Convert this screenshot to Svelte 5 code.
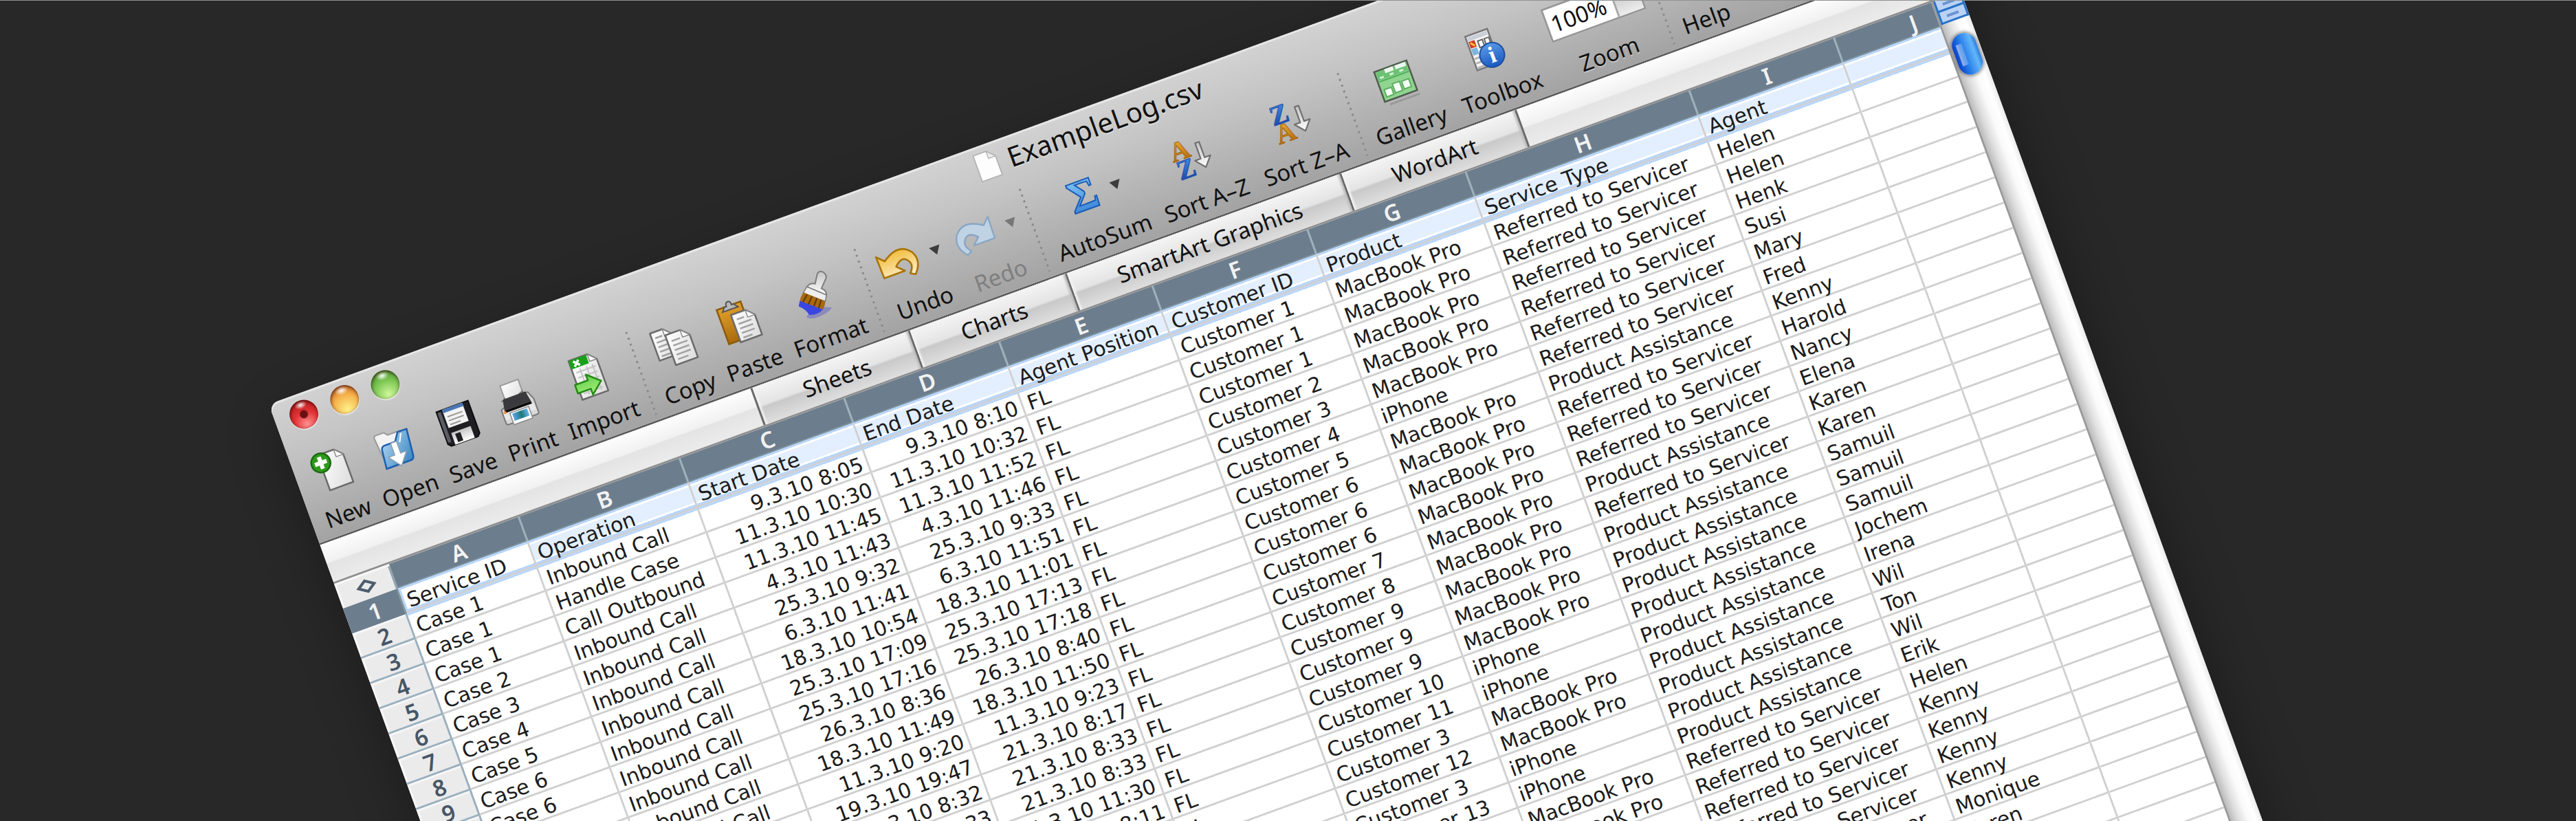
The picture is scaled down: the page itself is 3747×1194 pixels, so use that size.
<script>
  const tools = [
    { id: 'new', label: 'New' },
    { id: 'open', label: 'Open' },
    { id: 'save', label: 'Save' },
    { id: 'print', label: 'Print' },
    { id: 'import', label: 'Import' },
    { id: 'sep1', sep: true },
    { id: 'copy', label: 'Copy' },
    { id: 'paste', label: 'Paste' },
    { id: 'format', label: 'Format' },
    { id: 'sep2', sep: true },
    { id: 'undo', label: 'Undo', menu: true },
    { id: 'redo', label: 'Redo', menu: true, disabled: true },
    { id: 'sep3', sep: true },
    { id: 'sum', label: 'AutoSum', menu: true },
    { id: 'az', label: 'Sort A–Z', wide: true },
    { id: 'za', label: 'Sort Z–A', wide: true },
    { id: 'sep4', sep: true },
    { id: 'gallery', label: 'Gallery' },
    { id: 'toolbox', label: 'Toolbox', wide: true },
    { id: 'zoom', zoom: true },
    { id: 'sep5', sep: true },
    { id: 'help', label: 'Help' }
  ];

  const tabs = ['Sheets', 'Charts', 'SmartArt Graphics', 'WordArt'];
  const letters = ['A', 'B', 'C', 'D', 'E', 'F', 'G', 'H', 'I', 'J'];

  const MB = 'MacBook Pro';
  const IP = 'iPhone';
  const RS = 'Referred to Servicer';
  const PA = 'Product Assistance';

  const records = [
    [1, 'Inbound Call', '9.3.10 8:05', '9.3.10 8:10', 1, MB, RS, 'Helen'],
    [1, 'Handle Case', '11.3.10 10:30', '11.3.10 10:32', 1, MB, RS, 'Helen'],
    [1, 'Call Outbound', '11.3.10 11:45', '11.3.10 11:52', 1, MB, RS, 'Henk'],
    [2, 'Inbound Call', '4.3.10 11:43', '4.3.10 11:46', 2, MB, RS, 'Susi'],
    [3, 'Inbound Call', '25.3.10 9:32', '25.3.10 9:33', 3, MB, RS, 'Mary'],
    [4, 'Inbound Call', '6.3.10 11:41', '6.3.10 11:51', 4, IP, RS, 'Fred'],
    [5, 'Inbound Call', '18.3.10 10:54', '18.3.10 11:01', 5, MB, PA, 'Kenny'],
    [6, 'Inbound Call', '25.3.10 17:09', '25.3.10 17:13', 6, MB, RS, 'Harold'],
    [6, 'Inbound Call', '25.3.10 17:16', '25.3.10 17:18', 6, MB, RS, 'Nancy'],
    [6, 'Inbound Call', '26.3.10 8:36', '26.3.10 8:40', 6, MB, RS, 'Elena'],
    [7, 'Inbound Call', '18.3.10 11:49', '18.3.10 11:50', 7, MB, PA, 'Karen'],
    [8, 'Inbound Call', '11.3.10 9:20', '11.3.10 9:23', 8, MB, RS, 'Karen'],
    [9, 'Inbound Call', '19.3.10 19:47', '21.3.10 8:17', 9, MB, PA, 'Samuil'],
    [9, 'Inbound Call', '21.3.10 8:32', '21.3.10 8:33', 9, MB, PA, 'Samuil'],
    [9, 'Inbound Call', '21.3.10 8:33', '21.3.10 8:33', 9, MB, PA, 'Samuil'],
    [10, 'Inbound Call', '21.3.10 11:28', '21.3.10 11:30', 10, IP, PA, 'Jochem'],
    [11, 'Inbound Call', '22.3.10 8:09', '22.3.10 8:11', 11, IP, PA, 'Irena'],
    [3, 'Inbound Call', '22.3.10 9:02', '22.3.10 9:10', 3, MB, PA, 'Wil'],
    [12, 'Inbound Call', '22.3.10 9:14', '22.3.10 9:20', 12, MB, PA, 'Ton'],
    [3, 'Inbound Call', '22.3.10 9:31', '22.3.10 9:35', 3, IP, PA, 'Wil'],
    [13, 'Inbound Call', '22.3.10 9:40', '22.3.10 9:44', 13, IP, PA, 'Erik'],
    [14, 'Inbound Call', '23.3.10 8:10', '23.3.10 8:15', 14, MB, RS, 'Helen'],
    [15, 'Inbound Call', '23.3.10 8:20', '23.3.10 8:25', 15, MB, RS, 'Kenny'],
    [15, 'Inbound Call', '23.3.10 8:30', '23.3.10 8:35', 15, MB, RS, 'Kenny'],
    [16, 'Inbound Call', '23.3.10 8:40', '23.3.10 8:45', 16, MB, RS, 'Kenny'],
    [16, 'Inbound Call', '23.3.10 8:50', '23.3.10 8:55', 16, MB, RS, 'Kenny'],
    [17, 'Inbound Call', '23.3.10 9:10', '23.3.10 9:15', 17, MB, RS, 'Monique'],
    [18, 'Inbound Call', '23.3.10 9:20', '23.3.10 9:25', 18, MB, RS, 'Karen'],
    [18, 'Inbound Call', '23.3.10 9:30', '23.3.10 9:35', 18, MB, RS, ''],
    [19, 'Inbound Call', '23.3.10 9:40', '23.3.10 9:45', 19, MB, RS, ''],
    [19, 'Inbound Call', '23.3.10 9:50', '23.3.10 9:55', 19, MB, RS, ''],
    [20, 'Inbound Call', '24.3.10 8:10', '24.3.10 8:15', 20, MB, RS, '']
  ];

  const rows = [
    ['Service ID', 'Operation', 'Start Date', 'End Date', 'Agent Position', 'Customer ID', 'Product', 'Service Type', 'Agent', ''],
    ...records.map(([c, op, s, e, cu, p, t, a]) => [`Case ${c}`, op, s, e, 'FL', `Customer ${cu}`, p, t, a, ''])
  ];

  let zoom = $state('100%');
</script>

{#snippet page(x, y, w, h)}
  <path
    d="M{x} {y}h{w - 11}l11 11v{h - 11}h{-w}z"
    fill="url(#paper)" stroke="#6b6b6b" stroke-width="2.5" stroke-linejoin="round" />
  <path d="M{x + w - 11} {y}v11h11z" fill="#fff" stroke="#8a8a8a" stroke-width="1.5" stroke-linejoin="round" />
{/snippet}

{#snippet lines(x, y, w)}
  <path
    d="M{x} {y}h{w - 9}M{x} {y + 7}h{w}M{x} {y + 14}h{w}M{x} {y + 21}h{w}M{x} {y + 28}h{w - 6}"
    stroke="#a2a2a2" stroke-width="2.5" fill="none" />
{/snippet}

{#snippet downArrow(x, y)}
  <path
    d="M{x - 3} {y}h6v24h9l-12 14l-12 -14h9z"
    fill="url(#silver)" stroke="#707070" stroke-width="2.2" stroke-linejoin="round" />
{/snippet}

{#snippet icon(id)}
  <svg class="icon" viewBox="0 0 66 66" aria-hidden="true">
    {#if id === 'new'}
      {@render page(20, 6, 36, 54)}
      <circle cx="21" cy="18" r="14" fill="#2f9a1d" stroke="#1d6a10" stroke-width="2.5" />
      <path d="M21 9v18M12 18h18" stroke="#fff" stroke-width="6" />
    {:else if id === 'open'}
      <path d="M9 12q0-4 4-4h12l4 5h18q4 0 4 4v38H13z" fill="#f3f3f3" stroke="#9a9a9a" stroke-width="2" />
      <path d="M11 59L14 31q1-5 6-5h16l8-12h14L54 54q-1 5-5 5z" fill="url(#folder)" stroke="#1d5fae" stroke-width="2.5" stroke-linejoin="round" />
      <path d="M48 17l-6 12" stroke="#fff" stroke-width="2" />
      <path d="M29 26h9v18h9L33 62L19 44h10z" fill="#fff" stroke="#8f9faf" stroke-width="1.5" />
    {:else if id === 'save'}
      <path d="M10 6h49v50l-4 4H14l-4-4z" fill="#1e1e22" stroke="#0c0c0e" stroke-width="2" />
      <path d="M11 8h5v46h-5z" fill="#5d5d66" />
      <path d="M19 6h31v28H19z" fill="#f2f2f2" />
      <path d="M19 6h31v5H19z" fill="#4a78b8" />
      <path d="M23 18h23M23 24h23M23 30h16" stroke="#9a9a9a" stroke-width="2" />
      <path d="M20 42h30v18H20z" fill="url(#silver)" />
      <path d="M25 45h8v13h-8z" fill="#1e1e22" />
    {:else if id === 'print'}
      <path d="M18 2h28v28H18z" fill="url(#paper)" stroke="#9b9b9b" stroke-width="2" />
      <path d="M12 24h6v-4M46 20v4h7l5 12v20q0 3-3 3H11q-3 0-3-3V36z" fill="#d8d8d8" stroke="#777" stroke-width="2" />
      <path d="M15 22h35l3 16H12z" fill="#3a3a3c" />
      <path d="M12 38h41v4H12z" fill="#0d0d0e" />
      <path d="M9 42h47v10H9z" fill="#e8e8e8" />
      <path d="M18 44h29v18H18z" fill="#fff" stroke="#8b8b8b" stroke-width="1.5" />
      <path d="M21 46h23v11H21z" fill="url(#photo)" />
      <circle cx="12" cy="41" r="2" fill="#f08a3c" />
    {:else if id === 'import'}
      {@render page(14, 2, 40, 60)}
      <path d="M14 2h27v13H14z" fill="#18a018" />
      <path d="M20 5l8 8M28 5l-8 8" stroke="#fff" stroke-width="3.5" />
      <path d="M19 22h30M19 30h30M19 38h30M19 54h30M26 18v40M36 18v40M45 18v40" stroke="#c4c4c4" stroke-width="2" fill="none" />
      <path d="M11 38h20v-9l18 16l-18 15v-9H11z" fill="url(#green)" stroke="#258a16" stroke-width="2.5" stroke-linejoin="round" />
    {:else if id === 'copy'}
      {@render page(5, 5, 30, 42)}
      {@render lines(10, 14, 20)}
      {@render page(25, 15, 34, 46)}
      {@render lines(31, 26, 22)}
    {:else if id === 'paste'}
      <path d="M8 6h37v53H8z" fill="url(#board)" stroke="#8a5a0c" stroke-width="2.5" />
      <path d="M15 12l5-6h3q0-6 4-6t4 6h3l5 6z" fill="#b9b9b9" stroke="#555" stroke-width="2" />
      {@render page(25, 20, 33, 42)}
      {@render lines(31, 29, 20)}
    {:else if id === 'format'}
      <path d="M10 60q20-12 40 0q-8 6-24 6q-12 0-16-6z" fill="#5a58c8" opacity="0.45" />
      <g transform="rotate(18 33 33)">
        <path d="M38 3q4-5 9-1t3 9l-7 14q8 4 7 10L22 22q5-6 12-4z" fill="url(#silver)" stroke="#7d7d7d" stroke-width="2" />
        <path d="M22 22l28 13l-2 9L16 31z" fill="#eee" stroke="#7d7d7d" stroke-width="1.5" />
        <path d="M17 30l31 14q-1 8-4 12L11 43q1-7 6-13z" fill="#a8690f" />
        <path d="M22 33l-7 12M29 36l-6 12M36 39l-5 12M42 42l-4 12" stroke="#5e3706" stroke-width="2" />
        <path d="M11 42l33 14q-8 8-20 7q-4-8-15-13z" fill="#3a46e0" />
      </g>
    {:else if id === 'undo'}
      <path d="M5 13L6 46L38 46L28 36Q40 24 47 33Q54 42 44 52L51 56Q66 40 57 24Q42 4 15 23Z" fill="url(#gold)" stroke="#a8740a" stroke-width="2.6" stroke-linejoin="round" />
    {:else if id === 'redo'}
      <path d="M61 13L60 46L28 46L38 36Q26 24 19 33Q12 42 22 52L15 56Q0 40 9 24Q24 4 51 23Z" fill="#bfd3e4" stroke="#8aa6c4" stroke-width="2.4" stroke-linejoin="round" />
    {:else if id === 'sum'}
      <text class="sigma" x="40" y="53" text-anchor="middle">Σ</text>
    {:else if id === 'az'}
      <text class="glyph amber" x="20" y="32" text-anchor="middle">A</text>
      <text class="glyph blue" x="20" y="60" text-anchor="middle">Z</text>
      {@render downArrow(48, 16)}
    {:else if id === 'za'}
      <text class="glyph blue" x="20" y="32" text-anchor="middle">Z</text>
      <text class="glyph amber" x="20" y="60" text-anchor="middle">A</text>
      {@render downArrow(48, 16)}
    {:else if id === 'gallery'}
      <path d="M14 60h46" stroke="#999" stroke-width="3" />
      <path d="M8 8h50v46H8z" fill="#8fd58f" stroke="#4f5b4f" stroke-width="2.5" />
      <path d="M10 10h46v12H10z" fill="#6cc274" />
      <path d="M23 9h13v6H23zM39 9h16v6H39z" fill="#eef7ee" />
      <path d="M13 19h6M28 19h6M43 19h6" stroke="#d4f0d4" stroke-width="3" />
      <path d="M10 24h46" stroke="#4fae5c" stroke-width="2" />
      <path d="M13 37h11v11H13zM27 33h11v14H27zM41 34h11v12H41z" fill="#f6fff6" stroke="#5fae62" stroke-width="2" />
    {:else if id === 'toolbox'}
      <path d="M10 5h34v52H10z" fill="#f5f5f5" stroke="#777" stroke-width="2.5" />
      <path d="M12 7h30v6H12z" fill="#c9ced8" />
      <path d="M12 14h9v10h-9z" fill="#d03a1c" />
      <path d="M14 16l5 6" stroke="#f7c43a" stroke-width="3" />
      <path d="M12 25h9v10h-9z" fill="#7fb6e0" />
      <path d="M25 17h7v10h-7zM35 17h7v10h-7z" fill="#fff" stroke="#666" stroke-width="2" />
      <path d="M12 40h30M12 47h30M12 54h30" stroke="#b4b4b4" stroke-width="3" />
      <circle cx="38" cy="43" r="18" fill="url(#info)" stroke="#1c4fa0" stroke-width="2" />
      <text class="info" x="38" y="54" text-anchor="middle">i</text>
    {:else}
      <circle cx="33" cy="33" r="26" fill="url(#info)" stroke="#1c4fa0" stroke-width="2" />
      <text class="info" x="33" y="46" text-anchor="middle">?</text>
    {/if}
  </svg>
{/snippet}

<svg class="defs" width="0" height="0" aria-hidden="true">
  <defs>
    <linearGradient id="paper" x1="0" y1="0" x2="1" y2="1"><stop offset="0" stop-color="#fff" /><stop offset="1" stop-color="#dcdcdc" /></linearGradient>
    <linearGradient id="silver" x1="0" y1="0" x2="0" y2="1"><stop offset="0" stop-color="#c4c4c4" /><stop offset="1" stop-color="#fff" /></linearGradient>
    <linearGradient id="folder" x1="0" y1="0" x2="1" y2="1"><stop offset="0" stop-color="#bfe0f7" /><stop offset="1" stop-color="#2f7fbd" /></linearGradient>
    <linearGradient id="photo" x1="0" y1="0" x2="1" y2="0"><stop offset="0" stop-color="#5aa2f0" /><stop offset="0.55" stop-color="#1c7a78" /><stop offset="1" stop-color="#6cb8f4" /></linearGradient>
    <linearGradient id="green" x1="0" y1="0" x2="0" y2="1"><stop offset="0" stop-color="#5fd04a" /><stop offset="1" stop-color="#a8ee7a" /></linearGradient>
    <linearGradient id="board" x1="0" y1="0" x2="0" y2="1"><stop offset="0" stop-color="#e0a02c" /><stop offset="1" stop-color="#a86a0c" /></linearGradient>
    <linearGradient id="gold" x1="0" y1="0" x2="0" y2="1"><stop offset="0" stop-color="#f2bd3a" /><stop offset="1" stop-color="#fdf0d2" /></linearGradient>
    <linearGradient id="sigma" x1="0" y1="0" x2="0" y2="1"><stop offset="0" stop-color="#8cd0fb" /><stop offset="1" stop-color="#2f7ad4" /></linearGradient>
    <linearGradient id="amber" x1="0" y1="0" x2="0" y2="1"><stop offset="0" stop-color="#f4b83a" /><stop offset="1" stop-color="#a85c06" /></linearGradient>
    <linearGradient id="blue" x1="0" y1="0" x2="0" y2="1"><stop offset="0" stop-color="#4a9cec" /><stop offset="1" stop-color="#123a9c" /></linearGradient>
    <linearGradient id="info" x1="0" y1="0" x2="0" y2="1"><stop offset="0" stop-color="#5b9ae6" /><stop offset="1" stop-color="#1758c0" /></linearGradient>
  </defs>
</svg>

<main class="stage">
  <section class="window" aria-label="ExampleLog.csv">
    <header class="chrome">
      <div class="titlebar">
        <div class="lights">
          <button class="light red" aria-label="Close"></button>
          <button class="light amber-light" aria-label="Minimize"></button>
          <button class="light green" aria-label="Zoom window"></button>
        </div>
        <h1>
          <svg class="doc" viewBox="0 0 33 42" aria-hidden="true">
            <path d="M1 1h20l11 11v29H1z" fill="#fdfdfd" stroke="#b4b4b4" stroke-width="2" />
            <path d="M21 1v11h11z" fill="#ececec" stroke="#b4b4b4" stroke-width="1.5" />
          </svg>
          ExampleLog.csv
        </h1>
      </div>

      <div class="tools">
        {#each tools as t (t.id)}
          {#if t.sep}
            <span class="sep"></span>
          {:else if t.zoom}
            <div class="tool zoom">
              <span class="combo">
                <input id="zoom" bind:value={zoom} />
                <button class="drop" aria-label="Zoom levels"></button>
              </span>
              <label for="zoom">Zoom</label>
            </div>
          {:else}
            <button class="tool" class:wide={t.wide} class:disabled={t.disabled} disabled={t.disabled}>
              <span class="art">
                {@render icon(t.id)}
                {#if t.menu}<span class="tri"></span>{/if}
              </span>
              <span>{t.label}</span>
            </button>
          {/if}
        {/each}
      </div>
    </header>

    <nav class="tabs">
      {#each tabs as tab (tab)}
        <button class="tab">{tab}</button>
      {/each}
    </nav>

    <div class="body">
      <table>
        <colgroup>
          <col class="c-num" /><col class="c-a" /><col class="c-b" /><col class="c-c" /><col class="c-d" />
          <col class="c-e" /><col class="c-f" /><col class="c-g" /><col class="c-h" /><col class="c-i" /><col />
        </colgroup>
        <thead>
          <tr>
            <th class="corner" aria-label="Select all">
              <svg viewBox="0 0 36 24" aria-hidden="true"><path d="M18 4L30 12L18 20L6 12Z" fill="none" stroke="#4c5c6c" stroke-width="4" /></svg>
            </th>
            {#each letters as l (l)}<th scope="col">{l}</th>{/each}
          </tr>
        </thead>
        <tbody>
          {#each rows as row, r}
            <tr class:selected={r === 0} class:after={r === 1}>
              <th scope="row">{r + 1}</th>
              {#each row as cell, c}
                <td class:right={r > 0 && (c === 2 || c === 3)}>{cell}</td>
              {/each}
            </tr>
          {/each}
        </tbody>
      </table>

      <div class="scroll">
        <div class="split"><span></span><span></span></div>
        <div class="thumb"></div>
      </div>
    </div>
  </section>
</main>

<style>
  :global(body) {
    margin: 0;
    background: #282828;
  }

  .defs {
    position: absolute;
  }

  .stage {
    position: relative;
    height: 100vh;
    overflow: hidden;
    box-sizing: border-box;
    border-top: 1px solid #8d9490;
    background: #282828;
    font-family: 'Noto Sans', 'Open Sans', sans-serif;
    font-size: 33px;
    line-height: 45px;
    color: #111;
  }

  .window {
    position: absolute;
    left: 391px;
    top: 587px;
    width: 67.2vw;
    transform: rotate(-20deg);
    transform-origin: 0 0;
    border-radius: 14px 14px 0 0;
    box-shadow: 0 30px 80px rgba(0, 0, 0, 0.32);
    background: #fff;
  }

  button,
  input {
    font: inherit;
    color: inherit;
    border: 0;
    padding: 0;
    margin: 0;
    background: none;
  }

  .chrome {
    border-radius: 14px 14px 0 0;
    border-bottom: 3px solid #5b5b5b;
    background: linear-gradient(#d2d2d2, #c4c4c4 35%, #a3a3a3);
    box-shadow: inset 0 3px 0 #e6e6e6;
    text-shadow: 0 2px 0 rgba(255, 255, 255, 0.35);
  }

  .titlebar {
    display: grid;
    grid-template-columns: 1fr auto 1fr;
    align-items: center;
    height: 62px;
    padding: 0 22px;
  }

  .lights {
    display: flex;
    gap: 21px;
  }

  .light {
    width: 42px;
    height: 42px;
    border-radius: 50%;
    box-shadow: inset 0 2px 5px rgba(40, 0, 0, 0.7), 0 2px 1px rgba(255, 255, 255, 0.5);
  }

  .red {
    background:
      radial-gradient(ellipse 22% 14% at 50% 16%, #fff, transparent),
      radial-gradient(circle at 50% 50%, #6b0f10 0 16%, transparent 24%),
      radial-gradient(circle at 50% 85%, #ff8f8f, #e23335 45%, #a31213);
  }

  .amber-light {
    background:
      radial-gradient(ellipse 24% 16% at 50% 17%, #fff, transparent),
      radial-gradient(circle at 50% 85%, #fff08a, #f5b34c 50%, #c4561a);
  }

  .green {
    background:
      radial-gradient(ellipse 24% 16% at 50% 17%, #fff, transparent),
      radial-gradient(circle at 50% 85%, #d0f79a, #7cc653 50%, #3f8a26);
  }

  h1 {
    display: flex;
    align-items: center;
    gap: 15px;
    margin: 0;
    font-size: 40px;
    font-weight: 400;
    line-height: 54px;
  }

  .doc {
    width: 33px;
    height: 42px;
  }

  .tools {
    display: flex;
    gap: 19px;
    padding: 17px 20px 5px;
  }

  .tool {
    display: flex;
    flex-direction: column;
    align-items: center;
    gap: 11px;
    padding-top: 9px;
    white-space: nowrap;
  }

  .wide {
    min-width: 135px;
  }

  .disabled {
    color: #7f7f7f;
  }

  .art {
    display: flex;
    align-items: center;
    gap: 16px;
    height: 66px;
  }

  .icon {
    display: block;
    width: 66px;
    height: 66px;
    overflow: visible;
  }

  .tri {
    border: 8px solid transparent;
    border-top: 13px solid #3c3c3c;
    border-bottom: 0;
  }

  .disabled .tri {
    border-top-color: #777;
  }

  .sep {
    width: 3px;
    margin-bottom: 3px;
    background: repeating-linear-gradient(#8b8b8b 0 3px, transparent 3px 9px);
  }

  .sigma,
  .glyph,
  .info {
    font-family: 'Liberation Serif', serif;
    font-weight: 700;
    text-shadow: none;
  }

  .sigma {
    font-size: 66px;
    fill: url(#sigma);
    stroke: #1b5cb4;
    stroke-width: 2px;
  }

  .glyph {
    font-size: 40px;
    stroke-width: 1px;
  }

  .amber {
    fill: url(#amber);
    stroke: #a8650c;
  }

  .blue {
    fill: url(#blue);
    stroke: #1c4fae;
  }

  .info {
    font-size: 34px;
    fill: #fff;
  }

  .zoom {
    padding-left: 6px;
  }

  .combo {
    display: flex;
    box-sizing: border-box;
    width: 146px;
    height: 52px;
    margin: 5px 0 9px;
    border: 3px solid #979797;
    background: #fff;
  }

  .combo input {
    flex: 1;
    width: 0;
    padding-left: 5px;
  }

  .drop {
    width: 40px;
    border-left: 3px solid #a9a9a9;
    background: linear-gradient(#b9b9b9, #ededed);
  }

  .tabs {
    display: flex;
    justify-content: center;
    height: 57px;
    border-bottom: 3px solid #8f8f8f;
    background: linear-gradient(#fdfdfd, #f1f1f1 48%, #e4e4e4 52%, #ebebeb);
  }

  .tab {
    padding: 0 69px;
    border-right: 3px solid #6a6a6a;
    background: linear-gradient(#f4f4f4, #e4e4e4 50%, #c9c9c9 56%, #dedede);
    box-shadow: inset -5px 0 3px -2px #bdbdbd, inset 5px 0 3px -2px #f2f2f2;
    white-space: nowrap;
  }

  .tab:first-child {
    border-left: 3px solid #6a6a6a;
  }

  .body {
    display: flex;
  }

  table {
    flex: 1;
    width: 0;
    table-layout: fixed;
    border-collapse: separate;
    border-spacing: 0;
    background: #fff;
  }

  .c-num { width: 85px; }
  .c-a { width: 202px; }
  .c-b { width: 249px; }
  .c-c { width: 255px; }
  .c-d { width: 240px; }
  .c-e { width: 237px; }
  .c-f { width: 240px; }
  .c-g { width: 245px; }
  .c-h { width: 346px; }
  .c-i { width: 224px; }

  th,
  td {
    box-sizing: border-box;
    height: 39px;
    line-height: 39px;
    white-space: nowrap;
  }

  thead th {
    height: 38px;
    padding: 0;
    font-weight: 600;
    line-height: 38px;
    color: #f2f2f2;
    background: #6c7d8d;
    box-shadow: inset -3px 0 #9db3bb, inset 0 -2px #80969f;
  }

  thead th:last-child {
    padding-left: 80px;
    box-shadow: inset 0 -2px #80969f;
  }

  thead .corner {
    background: #ebebeb;
    box-shadow: inset 3px 3px #f7f7f7, inset -3px 0 #8fa4b0;
  }

  .corner svg {
    display: block;
    width: 36px;
    height: 24px;
    margin: 0 auto;
  }

  tbody th {
    padding: 0;
    text-align: center;
    font-weight: 600;
    color: #465666;
    background: #ebebeb;
    box-shadow: inset -3px -3px #9ab0be, inset 3px 3px #f6f6f6;
  }

  td {
    padding: 4px 9px 0 7px;
    line-height: 35px;
    font-family: 'DejaVu Sans', Verdana, sans-serif;
    font-size: 30px;
    color: #1c1c1c;
    text-align: left;
    box-shadow: inset -3px -3px #d0d0d0;
  }

  td:last-child {
    box-shadow: inset 0 -3px #d0d0d0;
  }

  .right {
    text-align: right;
  }

  .selected th {
    color: #f2f2f2;
    background: #6c7d8d;
    box-shadow: inset -3px 0 #80969f;
  }

  .selected td {
    background: linear-gradient(#b8d6fd 0 3px, #fff 3px 6px, #e3effe 6px 30px, #fff 30px 33px, #b8d6fd 33px);
  }

  .selected td:nth-child(2) {
    background: linear-gradient(#b8d6fd 0 3px, #fff 3px 33px, #b8d6fd 33px);
    box-shadow: inset -3px -3px #d0d0d0, inset 3px 0 #b8d6fd;
  }

  .after td {
    background: linear-gradient(#b8d6fd 0 3px, #fff 3px);
  }

  .scroll {
    display: flex;
    flex-direction: column;
    align-items: center;
    box-sizing: border-box;
    width: 46px;
    border-left: 3px solid #999;
    background: linear-gradient(90deg, #bcbcbc, #dedede 25%, #fafafa 55%, #fff 80%, #ececec);
  }

  .split {
    align-self: stretch;
    background: #b9d3f6;
  }

  .split span {
    display: block;
    height: 15px;
    border: solid #2a72c4;
    border-width: 0 3px 3px;
    background: linear-gradient(#6d93cf, #6d93cf) center / 18px 4px no-repeat;
  }

  .thumb {
    width: 36px;
    height: 62px;
    margin-top: 21px;
    border-radius: 18px;
    background:
      linear-gradient(90deg, rgba(255, 255, 255, 0.55), rgba(255, 255, 255, 0.2)) 6px 14px / 9px 32px no-repeat,
      linear-gradient(90deg, #0b3fc6, #2379e6 35%, #63b6fb 80%, #2a7ad8);
    box-shadow: 0 0 4px 2px rgba(60, 60, 60, 0.55);
  }
</style>
